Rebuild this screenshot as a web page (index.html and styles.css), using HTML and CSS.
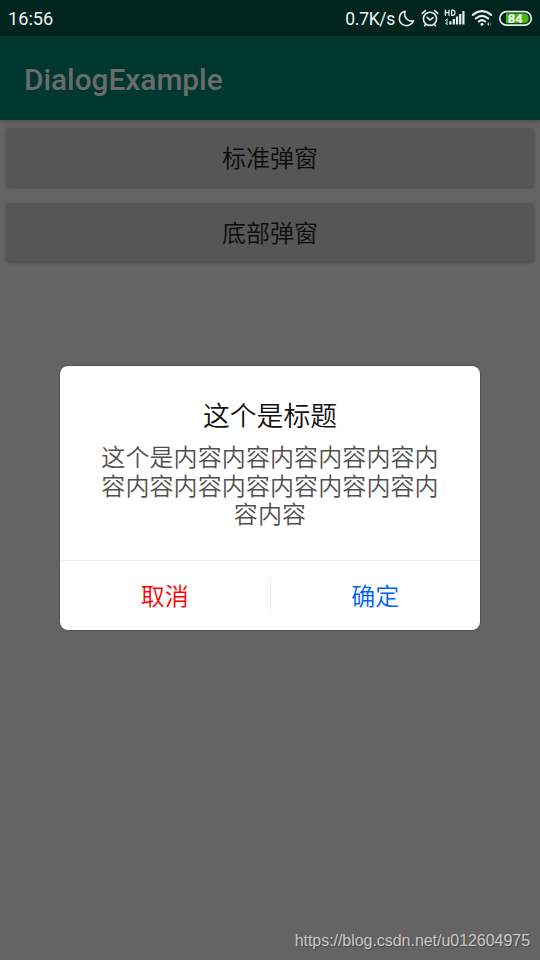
FILE: index.html
```html
<!DOCTYPE html>
<html lang="zh-CN">
<head>
<meta charset="utf-8">
<title>DialogExample</title>
<link rel="stylesheet" href="styles.css">
</head>
<body>
<div class="screen">
  <header class="status">
    <span class="clock">16:56</span>
    <span class="speed">0.7K/s</span>
    <svg class="icons" width="140" height="36" viewBox="395 0 140 36" fill="none" stroke="#e8efed" stroke-width="1.6" stroke-linecap="round" stroke-linejoin="round">
      <path d="M405 11.200C398.500 12.800 397.600 21.400 402.800 24.600C406.500 26.800 411.800 25.200 413.600 20.800C408.600 22.300 403.200 17.800 405 11.200Z"/>
      <circle cx="430" cy="18.800" r="6.600"/>
      <path d="M427.200 17.400L430 20L433 17.600M422.200 13.400L425.400 10.600M437.800 13.400L434.600 10.600M425.800 24.400L424.600 25.600M434.200 24.400L435.400 25.600"/>
      <path d="M445.400 10.200V15.300M449 10.200V15.300M445.400 12.700H449M451.600 10.200V15.300H452.600Q454.900 15.300 454.900 12.700T452.600 10.200Z" stroke-width="1.300"/>
      <path d="M450.400 21.300V24.600M453.800 19V24.600M457 16.500V24.600M460.200 14V24.600M463.400 11V24.600" stroke-width="2.200" stroke-linecap="butt"/>
      <path d="M445.500 20.500L447 19M447 19.300V24.300M445.500 23L447 24.500" stroke-width="1"/>
      <path d="M472.800 14.900Q482 7.400 491.200 14.900M475.800 18.500Q482 13.200 488.200 18.500M478.800 21.500Q482 18.700 485.200 21.500" stroke-width="2.100"/>
      <circle cx="482" cy="24.200" r="1.500" fill="#e8efed" stroke="none"/>
      <path d="M489 22L487 24L489 26Z" fill="#b5c2bf" stroke="none"/>
      <path d="M490 22L491.600 24L490 26Z" fill="#4d6660" stroke="none"/>
      <rect x="499.800" y="11.700" width="31.500" height="13.400" rx="6.700" stroke-width="1.700"/>
      <path d="M506 13.500H524Q528.800 13.500 528.800 18.300T524 23.200H506Z" fill="#46ba12" stroke="none"/>
      <text x="515.200" y="22.800" class="battery">84</text>
    </svg>
  </header>
  <div class="appbar">DialogExample</div>
  <main class="content">
    <div class="button">标准弹窗</div>
    <div class="button">底部弹窗</div>
  </main>
  <footer class="watermark">https://blog.csdn.net/u012604975</footer>
  <section class="dialog">
    <div class="message">
      <h1 class="title">这个是标题</h1>
      <p class="body">这个是内容内容内容内容内容内容内容内容内容内容内容内容内容内容</p>
    </div>
    <div class="actions">
      <div class="action cancel">取消</div>
      <div class="divider"></div>
      <div class="action confirm">确定</div>
    </div>
  </section>
</div>
</body>
</html>
```
FILE: styles.css
```css
* { box-sizing: border-box; }
body { margin: 0; }
.screen {
  position: relative;
  display: flex;
  flex-direction: column;
  width: 540px;
  height: 960px;
  overflow: hidden;
  background: #646464;
  font-family: "Noto Sans CJK SC", sans-serif;
  font-weight: 350;
}
.status {
  display: flex;
  align-items: center;
  height: 36px;
  padding: 0 5px 0 8px;
  background: #00241e;
  color: #f0f4f3;
  font-family: Roboto, sans-serif;
  font-weight: 400;
  font-size: 18.200px;
  line-height: 36px;
}
.clock { padding-top: 2px; }
.speed { margin-left: auto; padding-top: 1px; font-size: 17.500px; letter-spacing: -.3px; }
.icons { display: block; }
.battery {
  fill: #fff;
  stroke: none;
  font: bold 13px Roboto, sans-serif;
  text-anchor: middle;
}
.appbar {
  z-index: 1;
  height: 84px;
  padding: 2px 24px 0;
  background: #003731;
  box-shadow: 0 1px 5px rgba(0, 0, 0, .3);
  color: #6b6b6b;
  font-family: Roboto, sans-serif;
  font-size: 29.800px;
  font-weight: 500;
  line-height: 84px;
}
.content {
  display: flex;
  flex: 1;
  flex-direction: column;
  gap: 16px;
  padding: 8px 6px;
}
.button {
  height: 59px;
  border-radius: 3px;
  background: #565656;
  box-shadow: 0 1px 3px rgba(0, 0, 0, .25);
  color: #0c0c0c;
  font-size: 24px;
  line-height: 57px;
  text-align: center;
}
.watermark {
  height: 40px;
  padding-right: 10px;
  color: #c8c8c8;
  font: 16px/42px "Liberation Sans", sans-serif;
  letter-spacing: -.04px;
  text-align: right;
  text-shadow: 1px 1px 1px rgba(0, 0, 0, .3);
}
.dialog {
  position: absolute;
  z-index: 2;
  top: 366px;
  left: 60px;
  display: flex;
  flex-direction: column;
  width: 420px;
  height: 264px;
  border-radius: 8px;
  background: #fff;
  box-shadow: 0 0 2px rgba(0, 0, 0, .5);
}
.message {
  height: 194px;
  padding: 31px 40px 0;
  text-align: center;
}
.title {
  margin: 0;
  color: #101010;
  font-size: 26.800px;
  font-weight: inherit;
  line-height: 36px;
}
.body {
  margin: 9px 0 0;
  color: #505050;
  font-size: 24px;
  letter-spacing: .1px;
  line-height: 28.500px;
}
.actions {
  display: flex;
  align-items: center;
  height: 70px;
  border-top: 1px solid #ececec;
}
.action {
  flex: 1;
  font-size: 24px;
  line-height: 68px;
  padding-bottom: 2px;
  text-align: center;
}
.cancel { color: #f00; }
.confirm { color: #005eff; }
.divider { width: 1px; height: 35px; background: #ececec; }
```
